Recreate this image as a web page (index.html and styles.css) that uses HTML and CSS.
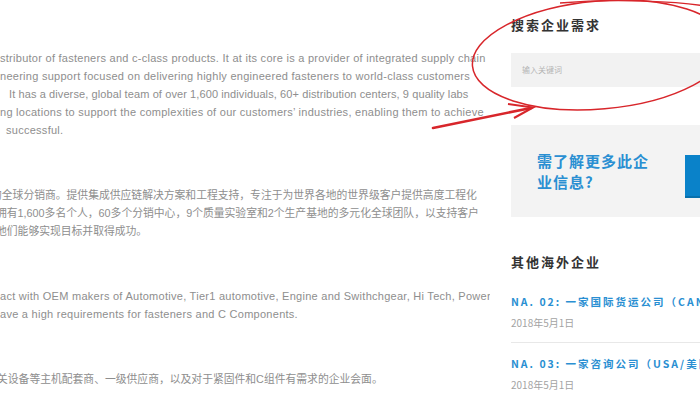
FILE: index.html
```html
<!DOCTYPE html>
<html lang="zh-CN">
<head>
<meta charset="utf-8">
<title>企业详情</title>
<link rel="stylesheet" href="styles.css">
</head>
<body>
<div class="page">
  <main class="article">
    <div class="block block-first">
      <div class="line en">stributor of fasteners and c-class products. It at its core is a provider of integrated supply chain</div>
      <div class="line en">neering support focused on delivering highly engineered fasteners to world-class customers</div>
      <div class="line en tight indent">It has a diverse, global team of over 1,600 individuals, 60+ distribution centers, 9 quality labs</div>
      <div class="line en">ng locations to support the complexities of our customers’ industries, enabling them to achieve</div>
      <div class="line en small-indent">successful.</div>
    </div>
    <div class="block">
      <div class="line zh cut-big">的全球分销商。提供集成供应链解决方案和工程支持，专注于为世界各地的世界级客户提供高度工程化</div>
      <div class="line zh cut">拥有1,600多名个人，60多个分销中心，9个质量实验室和2个生产基地的多元化全球团队，以支持客户</div>
      <div class="line zh cut">他们能够实现目标并取得成功。</div>
    </div>
    <div class="block">
      <div class="line en">act with OEM makers of Automotive, Tier1 automotive, Engine and Swithchgear, Hi Tech, Power</div>
      <div class="line en">ave a high requirements for fasteners and C Components.</div>
    </div>
    <div class="block">
      <div class="line zh cut-small">关设备等主机配套商、一级供应商，以及对于紧固件和C组件有需求的企业会面。</div>
    </div>
  </main>

  <aside class="sidebar">
    <h3 class="side-title">搜索企业需求</h3>
    <div class="search">输入关键词</div>

    <div class="contact">
      <div class="contact-text">需了解更多此企业信息?</div>
      <div class="contact-btn"></div>
    </div>

    <h3 class="side-title other-title">其他海外企业</h3>
    <ul class="news">
      <li class="news-item">
        <div class="news-title">NA. 02: 一家国际货运公司（CANADA/加拿大）</div>
        <div class="news-date">2018年5月1日</div>
      </li>
      <li class="news-item">
        <div class="news-title">NA. 03: 一家咨询公司（USA/美国）</div>
        <div class="news-date">2018年5月1日</div>
      </li>
    </ul>
  </aside>
</div>

<svg class="markup" width="700" height="400" viewBox="0 0 700 400" aria-hidden="true">
  <ellipse cx="600" cy="55" rx="128" ry="54" transform="rotate(-5 600 55)" fill="none" stroke="#d8262b" stroke-width="1.5"/>
  <path d="M560 3 C620 -2 680 2 705 6" fill="none" stroke="#d8262b" stroke-width="1.3"/>
  <path d="M433 128 L531 108" fill="none" stroke="#d8262b" stroke-width="2.6" stroke-linecap="round"/>
  <path d="M508 104 L533 107.5 L514 118" fill="none" stroke="#d8262b" stroke-width="2" stroke-linejoin="miter"/>
</svg>
</body>
</html>
```

FILE: styles.css
```css
* {
  box-sizing: border-box;
}

html, body {
  margin: 0;
  padding: 0;
  background: #ffffff;
  width: 700px;
  height: 400px;
  overflow: hidden;
}

body {
  font-family: "Liberation Sans", "Noto Sans CJK SC", sans-serif;
  position: relative;
}

.page {
  display: flex;
  align-items: flex-start;
  width: 760px;
}

.article {
  width: 490px;
  flex: 0 0 490px;
  overflow: hidden;
  margin-right: 21px;
  padding-top: 49px;
}

.block {
  margin-top: 47px;
}

.block-first {
  margin-top: 0;
}

.line {
  white-space: nowrap;
  line-height: 18px;
  color: #8e8e8e;
}

.en {
  font-size: 11px;
  letter-spacing: 0.27px;
}

.en.tight {
  letter-spacing: 0.1px;
}

.zh {
  font-size: 10.8px;
}

.indent {
  padding-left: 9px;
}

.small-indent {
  padding-left: 6px;
}

.cut {
  margin-left: -4px;
}

.cut-big {
  margin-left: -9px;
}

.cut-small {
  margin-left: -3px;
}

.sidebar {
  flex: 0 0 240px;
  width: 240px;
  padding-top: 15px;
}

.side-title {
  margin: 0;
  font-family: "Noto Sans CJK SC", sans-serif;
  font-size: 13px;
  line-height: 20px;
  font-weight: 700;
  letter-spacing: 2px;
  color: #333333;
}

.search {
  margin-top: 18px;
  height: 34px;
  background: #f2f2f2;
  padding-left: 11px;
  font-family: "Noto Sans CJK SC", sans-serif;
  font-size: 8px;
  line-height: 34px;
  color: #b4b4b4;
}

.contact {
  margin-top: 38px;
  height: 92px;
  background: #f3f3f3;
  display: flex;
  align-items: flex-start;
  padding: 25px 0 0 26px;
}

.contact-text {
  width: 122px;
  margin-right: 26px;
  font-family: "Noto Sans CJK SC", sans-serif;
  font-size: 15px;
  line-height: 21px;
  font-weight: 700;
  letter-spacing: 1px;
  color: #2a8fd2;
}

.contact-btn {
  margin-top: 5px;
  width: 60px;
  height: 43px;
  background: #0a82c9;
  border-bottom: 2px solid #0870ad;
}

.other-title {
  margin-top: 35px;
}

.news {
  list-style: none;
  margin: 9px 0 0;
  padding: 0;
}

.news-item {
  padding: 13px 0 11px;
  border-bottom: 1px solid #e8e8e8;
}

.news-item + .news-item {
  border-bottom: none;
}

.news-title {
  white-space: nowrap;
  font-family: "Noto Sans CJK SC", sans-serif;
  font-size: 10.5px;
  line-height: 16px;
  font-weight: 700;
  letter-spacing: 2px;
  color: #2a8fd2;
}

.news-date {
  margin-top: 5px;
  font-family: "Noto Sans CJK SC", sans-serif;
  font-size: 10px;
  line-height: 16px;
  color: #a3a3a3;
}

.markup {
  position: absolute;
  left: 0;
  top: 0;
  pointer-events: none;
}
```
